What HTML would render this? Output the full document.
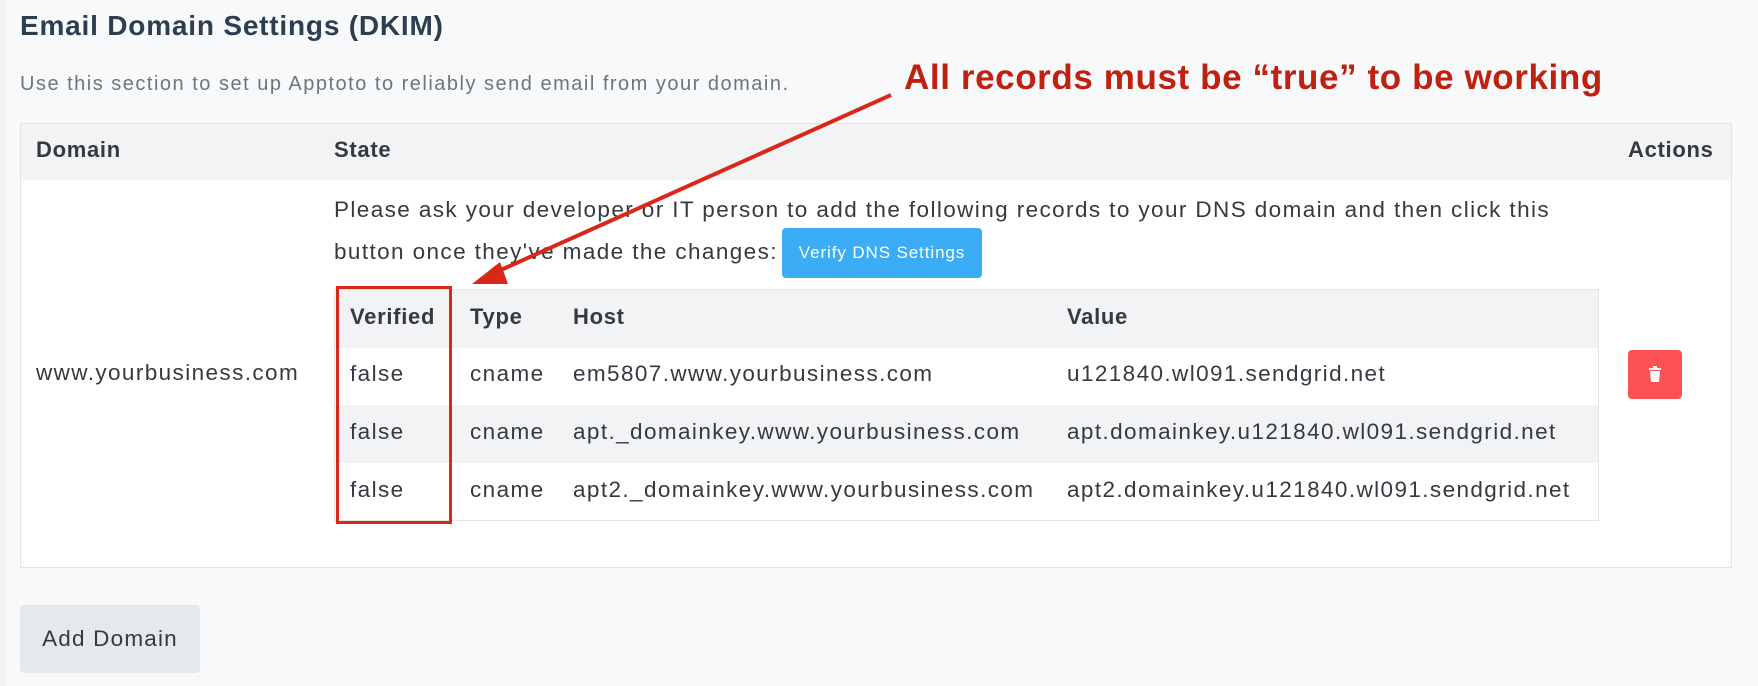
<!DOCTYPE html>
<html><head><meta charset="utf-8"><style>
*{box-sizing:border-box;margin:0;padding:0}
body{width:1758px;height:686px;background:#f8f9fa;font-family:"Liberation Sans",sans-serif;color:#343a40;position:relative;overflow:hidden}
.a{position:absolute;white-space:nowrap}
h1{position:absolute;left:20px;top:10px;font-size:28px;letter-spacing:0.8px;font-weight:bold;color:#2c3e50;white-space:nowrap}
.sub{left:20px;top:73px;font-size:20px;letter-spacing:1.5px;color:#6c757d}
.tbl{position:absolute;left:20px;top:123px;width:1712px;height:445px;background:#fff;border:1px solid #e3e6e9}
.hdr{position:absolute;left:0;top:0;right:0;height:56px;background:#f1f3f5}
.th{font-weight:bold;font-size:22px;letter-spacing:0.7px;color:#343a40}
.txt{font-size:22.5px;letter-spacing:1.4px;color:#343a40}
.btn{position:absolute;left:782px;top:228px;width:200px;height:50px;background:#3badf5;border-radius:4px;color:#fff;font-size:17px;letter-spacing:0.9px;text-align:center;line-height:50px;white-space:nowrap}
.inner{position:absolute;left:334px;top:289px;width:1265px;height:232px;border:1px solid #e3e6e9;background:#fff}
.r{position:absolute;left:0;right:0;height:58px}
</style></head><body>
<div style="position:absolute;left:0;top:0;width:6px;height:686px;background:#f1f2f4"></div>
<h1>Email Domain Settings (DKIM)</h1>
<div class="a sub">Use this section to set up Apptoto to reliably send email from your domain.</div>
<div class="tbl"><div class="hdr"></div></div>
<div class="a th" style="left:36px;top:137px">Domain</div>
<div class="a th" style="left:334px;top:137px">State</div>
<div class="a th" style="left:1628px;top:137px">Actions</div>
<div class="a txt" style="left:334px;top:197px">Please ask your developer or IT person to add the following records to your DNS domain and then click this</div>
<div class="a txt" style="left:334px;top:239px">button once they've made the changes:</div>
<div class="btn">Verify DNS Settings</div>
<div class="inner">
<div class="r" style="top:0;background:#f1f3f5"></div>
<div class="r" style="top:115px;background:#f1f3f5"></div>
</div>
<div class="a th" style="left:350px;top:304px">Verified</div>
<div class="a th" style="left:470px;top:304px">Type</div>
<div class="a th" style="left:573px;top:304px">Host</div>
<div class="a th" style="left:1067px;top:304px">Value</div>
<div class="a txt" style="left:36px;top:360px">www.yourbusiness.com</div>
<div class="a txt" style="left:350px;top:361px">false</div><div class="a txt" style="left:470px;top:361px">cname</div><div class="a txt" style="left:573px;top:361px">em5807.www.yourbusiness.com</div><div class="a txt" style="left:1067px;top:361px">u121840.wl091.sendgrid.net</div>
<div class="a txt" style="left:350px;top:419px">false</div><div class="a txt" style="left:470px;top:419px">cname</div><div class="a txt" style="left:573px;top:419px">apt._domainkey.www.yourbusiness.com</div><div class="a txt" style="left:1067px;top:419px">apt.domainkey.u121840.wl091.sendgrid.net</div>
<div class="a txt" style="left:350px;top:477px">false</div><div class="a txt" style="left:470px;top:477px">cname</div><div class="a txt" style="left:573px;top:477px">apt2._domainkey.www.yourbusiness.com</div><div class="a txt" style="left:1067px;top:477px">apt2.domainkey.u121840.wl091.sendgrid.net</div>
<div style="position:absolute;left:1628px;top:350px;width:54px;height:49px;background:#fa5252;border-radius:4px"></div>
<svg class="a" style="left:1648px;top:366px" width="14" height="16" viewBox="0 0 14 16"><rect x="1" y="2" width="12" height="2" fill="#fff"/><rect x="5" y="0" width="4" height="2" fill="#fff"/><path d="M2 5h10l-1 11H3z" fill="#fff"/></svg>
<div style="position:absolute;left:336px;top:286px;width:116px;height:238px;border:3px solid #d9281a"></div>
<svg class="a" style="left:0;top:0" width="1758" height="686"><line x1="891" y1="95" x2="492" y2="274" stroke="#d9281a" stroke-width="4"/><polygon points="472,284 500,262 508,284" fill="#d9281a"/></svg>
<div class="a" style="left:904px;top:58px;font-size:35px;letter-spacing:0.6px;font-weight:bold;color:#c0200f">All records must be “true” to be working</div>
<div style="position:absolute;left:20px;top:605px;width:180px;height:68px;background:#e6e9ec;border-radius:4px;font-size:22.5px;letter-spacing:1.2px;line-height:68px;text-align:center;color:#343a40;white-space:nowrap">Add Domain</div>
</body></html>
